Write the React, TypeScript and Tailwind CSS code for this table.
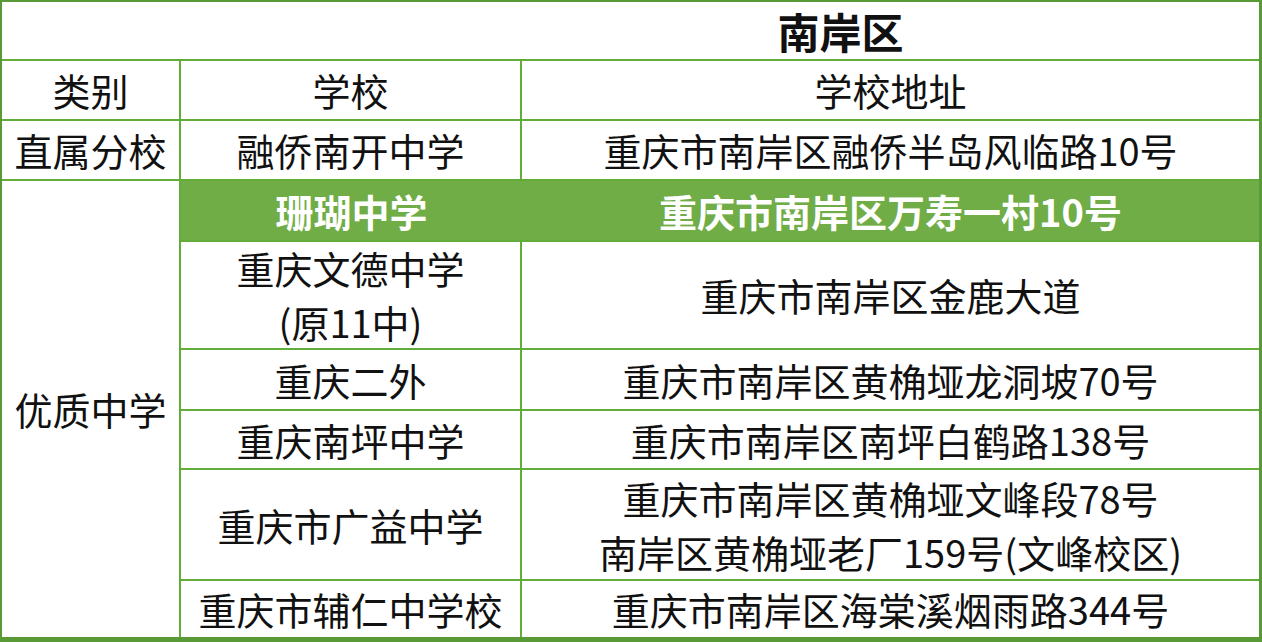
import React from 'react';

// 南岸区 school list
interface SchoolRow {
  name: string[];
  address: string[];
}

const topSchools: SchoolRow[] = [
  { name: ['重庆文德中学', '(原11中)'], address: ['重庆市南岸区金鹿大道'] },
  { name: ['重庆二外'], address: ['重庆市南岸区黄桷垭龙洞坡70号'] },
  { name: ['重庆南坪中学'], address: ['重庆市南岸区南坪白鹤路138号'] },
  { name: ['重庆市广益中学'], address: ['重庆市南岸区黄桷垭文峰段78号', '南岸区黄桷垭老厂159号(文峰校区)'] },
  { name: ['重庆市辅仁中学校'], address: ['重庆市南岸区海棠溪烟雨路344号'] },
];

const Cell: React.FC<{ lines: string[]; className?: string }> = ({ lines, className = '' }) => (
  <div
    className={`flex flex-col items-center justify-center text-center whitespace-nowrap bg-white text-[#111] ${
      lines.length > 1 ? 'leading-[54px]' : 'leading-none'
    } ${className}`}
  >
    {lines.map((l) => (
      <span key={l}>{l}</span>
    ))}
  </div>
);

export default function App() {
  return (
    <div
      className="w-[1262px] h-[642px] bg-white text-[38px]"
      style={{ fontFamily: '"Noto Sans CJK SC", "Noto Sans", sans-serif' }}
    >
      <div className="grid h-full grid-cols-[177px_339px_1fr] grid-rows-[57px_58px_58px_59px_106px_59px_57px_109px_56px] gap-[2px] bg-[#62ac3a] border-l-2 border-t-2 border-r-[3px] border-b-[5px] border-[#5a9a36]">
        <div className="col-span-3 flex items-center justify-center bg-white pl-[420px] text-[42px] font-bold leading-none text-[#111]">
          南岸区
        </div>

        <Cell lines={['类别']} />
        <Cell lines={['学校']} />
        <Cell lines={['学校地址']} />

        <Cell lines={['直属分校']} />
        <Cell lines={['融侨南开中学']} />
        <Cell lines={['重庆市南岸区融侨半岛风临路10号']} />

        <Cell lines={['优质中学']} className="row-span-6" />

        {/* highlighted row: one merged green band, no inner divider */}
        <div className="col-span-2 flex bg-[#70ad47] font-bold leading-none text-white whitespace-nowrap">
          <div className="flex w-[341px] items-center justify-center">珊瑚中学</div>
          <div className="flex flex-1 items-center justify-center">重庆市南岸区万寿一村10号</div>
        </div>

        {topSchools.map((s) => (
          <React.Fragment key={s.name[0]}>
            <Cell lines={s.name} />
            <Cell lines={s.address} />
          </React.Fragment>
        ))}
      </div>
    </div>
  );
}
